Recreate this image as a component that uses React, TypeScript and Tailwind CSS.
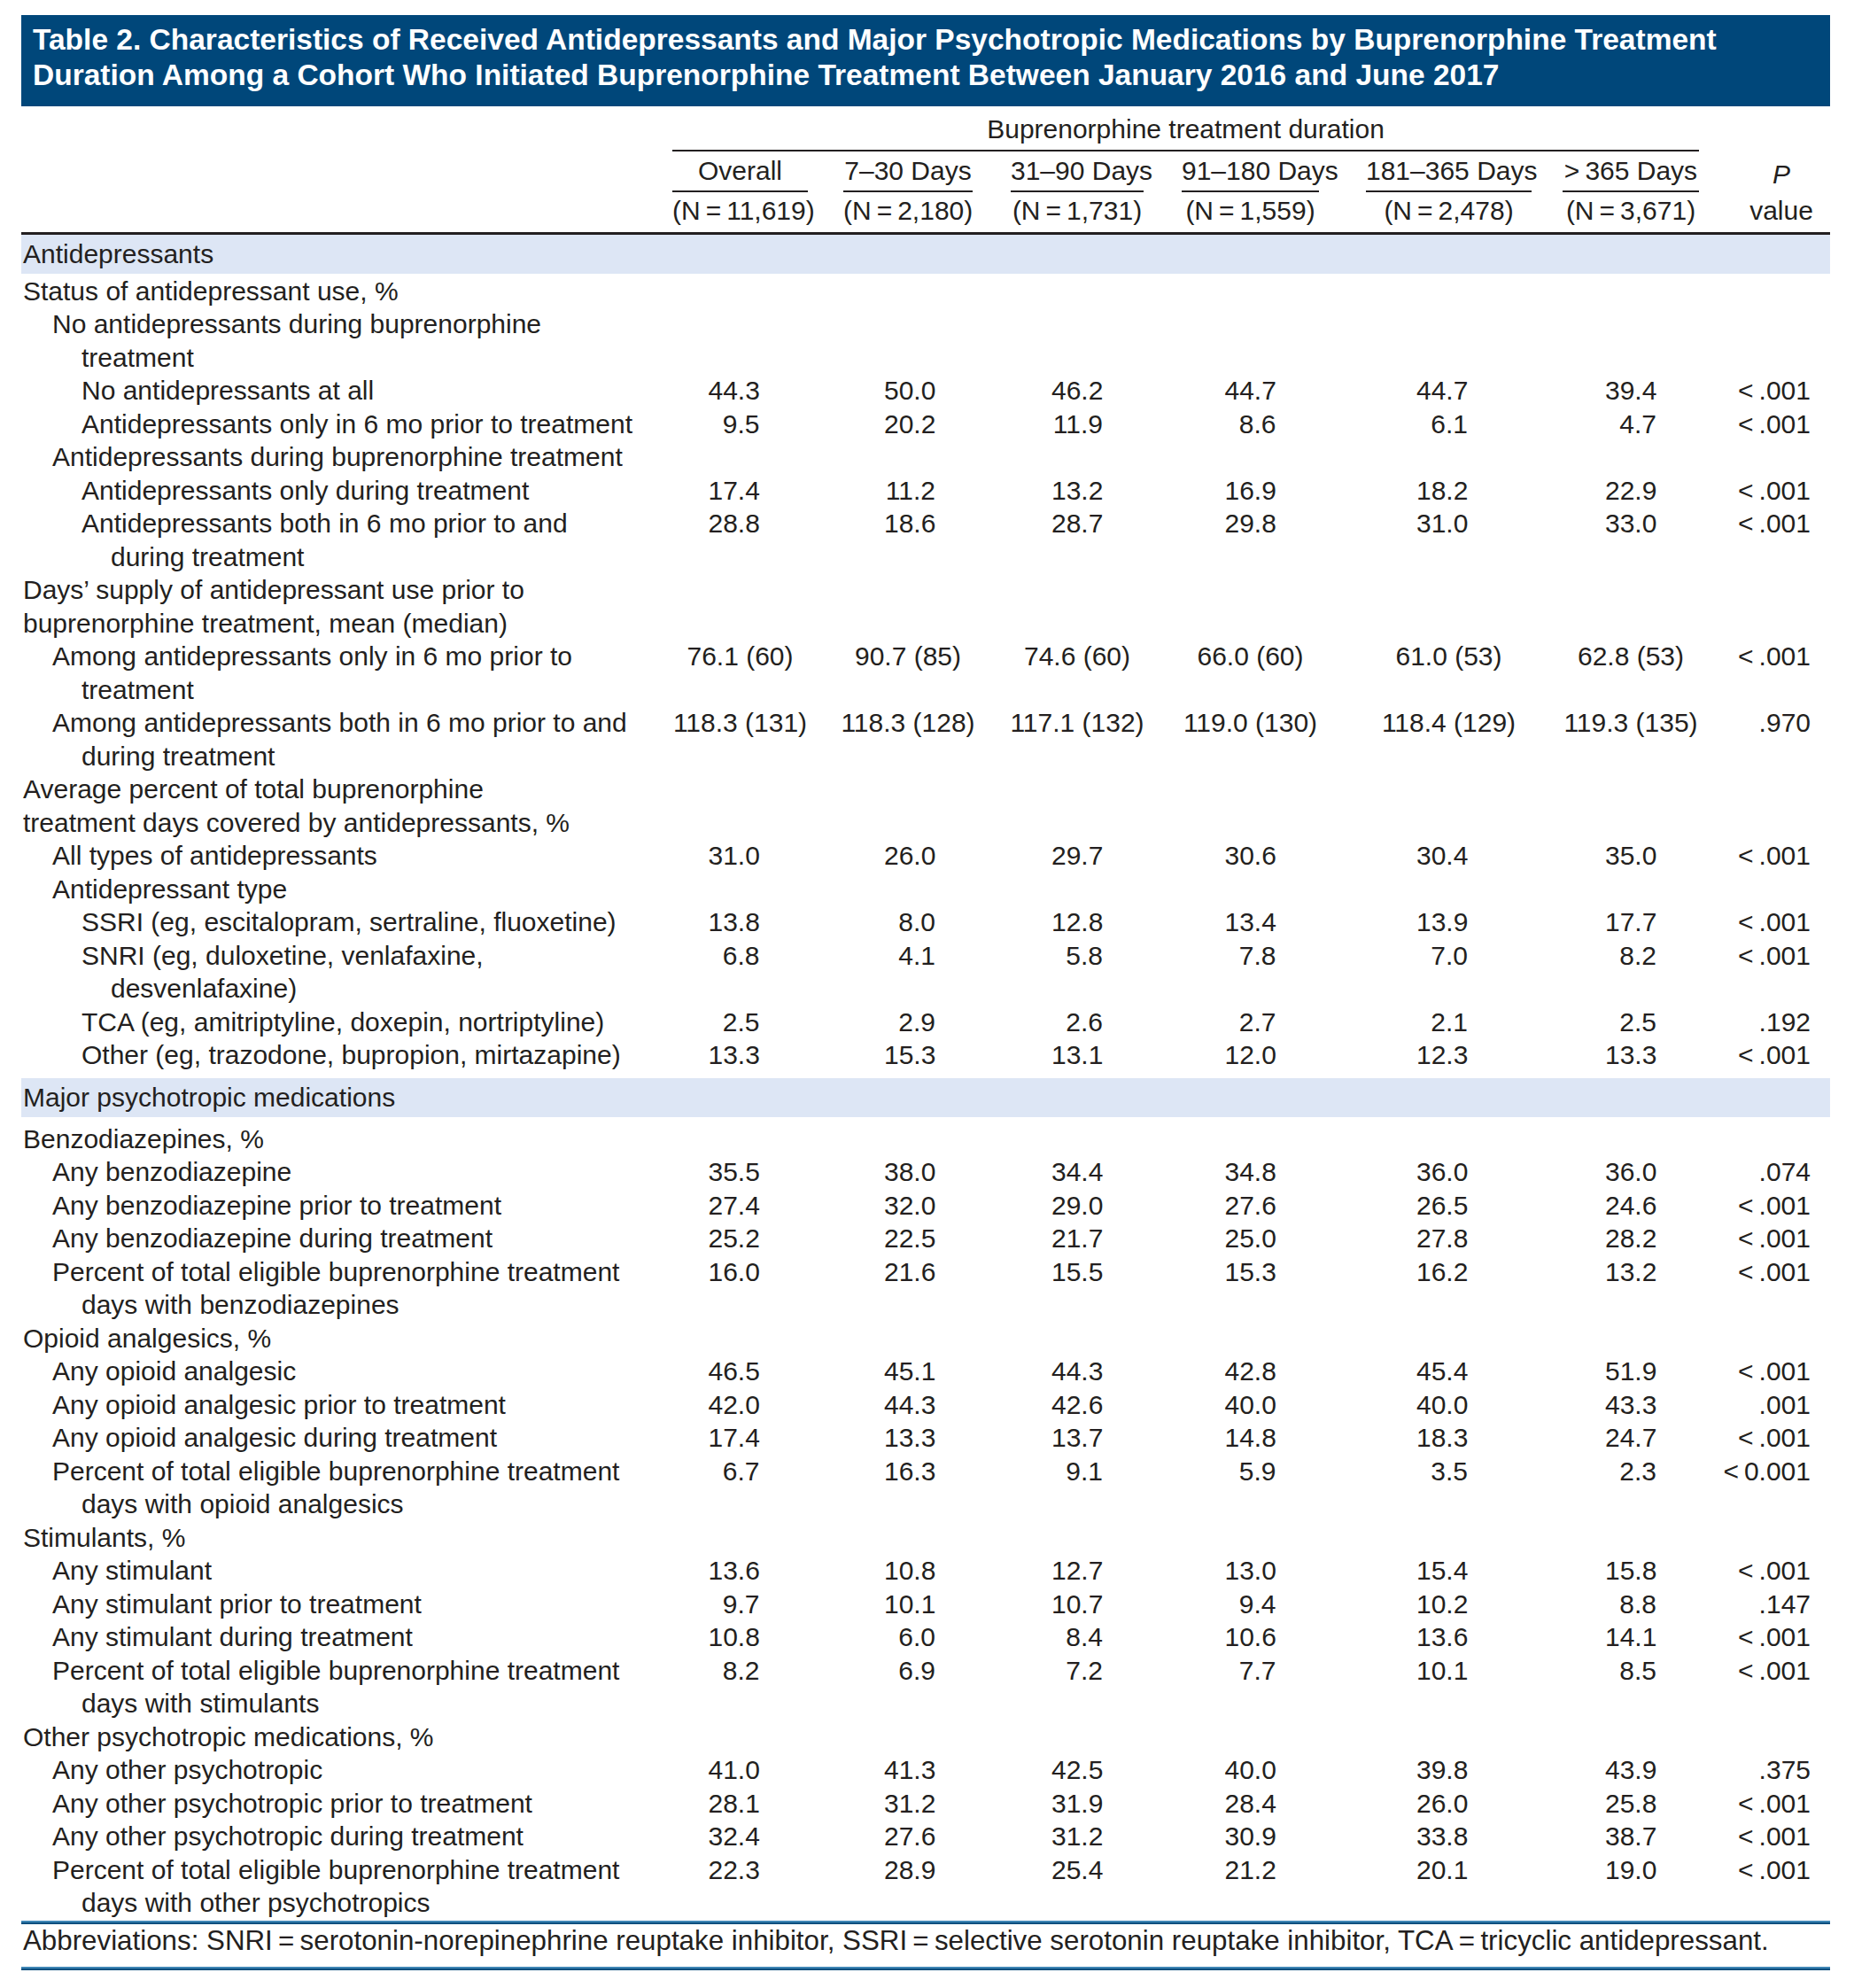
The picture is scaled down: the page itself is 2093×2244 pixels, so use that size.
import React from "react";

type R = { t: string; l: 0 | 1 | 2; c?: string; v?: string[]; p?: string; long?: boolean };

const LT = "<\u2009.001";

const S1: R[] = [
  { t: "Status of antidepressant use, %", l: 0 },
  { t: "No antidepressants during buprenorphine", l: 1, c: "treatment" },
  { t: "No antidepressants at all", l: 2, v: ["44.3", "50.0", "46.2", "44.7", "44.7", "39.4"], p: LT },
  { t: "Antidepressants only in 6 mo prior to treatment", l: 2, v: ["9.5", "20.2", "11.9", "8.6", "6.1", "4.7"], p: LT },
  { t: "Antidepressants during buprenorphine treatment", l: 1 },
  { t: "Antidepressants only during treatment", l: 2, v: ["17.4", "11.2", "13.2", "16.9", "18.2", "22.9"], p: LT },
  { t: "Antidepressants both in 6 mo prior to and", l: 2, c: "during treatment", v: ["28.8", "18.6", "28.7", "29.8", "31.0", "33.0"], p: LT },
  { t: "Days\u2019 supply of antidepressant use prior to", l: 0, c: "buprenorphine treatment, mean (median)" },
  { t: "Among antidepressants only in 6 mo prior to", l: 1, c: "treatment", v: ["76.1 (60)", "90.7 (85)", "74.6 (60)", "66.0 (60)", "61.0 (53)", "62.8 (53)"], p: LT, long: true },
  { t: "Among antidepressants both in 6 mo prior to and", l: 1, c: "during treatment", v: ["118.3 (131)", "118.3 (128)", "117.1 (132)", "119.0 (130)", "118.4 (129)", "119.3 (135)"], p: ".970", long: true },
  { t: "Average percent of total buprenorphine", l: 0, c: "treatment days covered by antidepressants, %" },
  { t: "All types of antidepressants", l: 1, v: ["31.0", "26.0", "29.7", "30.6", "30.4", "35.0"], p: LT },
  { t: "Antidepressant type", l: 1 },
  { t: "SSRI (eg, escitalopram, sertraline, fluoxetine)", l: 2, v: ["13.8", "8.0", "12.8", "13.4", "13.9", "17.7"], p: LT },
  { t: "SNRI (eg, duloxetine, venlafaxine,", l: 2, c: "desvenlafaxine)", v: ["6.8", "4.1", "5.8", "7.8", "7.0", "8.2"], p: LT },
  { t: "TCA (eg, amitriptyline, doxepin, nortriptyline)", l: 2, v: ["2.5", "2.9", "2.6", "2.7", "2.1", "2.5"], p: ".192" },
  { t: "Other (eg, trazodone, bupropion, mirtazapine)", l: 2, v: ["13.3", "15.3", "13.1", "12.0", "12.3", "13.3"], p: LT },
];

const S2: R[] = [
  { t: "Benzodiazepines, %", l: 0 },
  { t: "Any benzodiazepine", l: 1, v: ["35.5", "38.0", "34.4", "34.8", "36.0", "36.0"], p: ".074" },
  { t: "Any benzodiazepine prior to treatment", l: 1, v: ["27.4", "32.0", "29.0", "27.6", "26.5", "24.6"], p: LT },
  { t: "Any benzodiazepine during treatment", l: 1, v: ["25.2", "22.5", "21.7", "25.0", "27.8", "28.2"], p: LT },
  { t: "Percent of total eligible buprenorphine treatment", l: 1, c: "days with benzodiazepines", v: ["16.0", "21.6", "15.5", "15.3", "16.2", "13.2"], p: LT },
  { t: "Opioid analgesics, %", l: 0 },
  { t: "Any opioid analgesic", l: 1, v: ["46.5", "45.1", "44.3", "42.8", "45.4", "51.9"], p: LT },
  { t: "Any opioid analgesic prior to treatment", l: 1, v: ["42.0", "44.3", "42.6", "40.0", "40.0", "43.3"], p: ".001" },
  { t: "Any opioid analgesic during treatment", l: 1, v: ["17.4", "13.3", "13.7", "14.8", "18.3", "24.7"], p: LT },
  { t: "Percent of total eligible buprenorphine treatment", l: 1, c: "days with opioid analgesics", v: ["6.7", "16.3", "9.1", "5.9", "3.5", "2.3"], p: "<\u20090.001" },
  { t: "Stimulants, %", l: 0 },
  { t: "Any stimulant", l: 1, v: ["13.6", "10.8", "12.7", "13.0", "15.4", "15.8"], p: LT },
  { t: "Any stimulant prior to treatment", l: 1, v: ["9.7", "10.1", "10.7", "9.4", "10.2", "8.8"], p: ".147" },
  { t: "Any stimulant during treatment", l: 1, v: ["10.8", "6.0", "8.4", "10.6", "13.6", "14.1"], p: LT },
  { t: "Percent of total eligible buprenorphine treatment", l: 1, c: "days with stimulants", v: ["8.2", "6.9", "7.2", "7.7", "10.1", "8.5"], p: LT },
  { t: "Other psychotropic medications, %", l: 0 },
  { t: "Any other psychotropic", l: 1, v: ["41.0", "41.3", "42.5", "40.0", "39.8", "43.9"], p: ".375" },
  { t: "Any other psychotropic prior to treatment", l: 1, v: ["28.1", "31.2", "31.9", "28.4", "26.0", "25.8"], p: LT },
  { t: "Any other psychotropic during treatment", l: 1, v: ["32.4", "27.6", "31.2", "30.9", "33.8", "38.7"], p: LT },
  { t: "Percent of total eligible buprenorphine treatment", l: 1, c: "days with other psychotropics", v: ["22.3", "28.9", "25.4", "21.2", "20.1", "19.0"], p: LT },
];

const GRID = "grid grid-cols-[735px_153px_186px_193px_198px_240px_189px_148px]";
const GAP = ["pl-0", "pl-[40px]", "pl-[43px]", "pl-[43px]", "pl-[53px]", "pl-[35px]"];
const SHIFT = ["pr-[14px]", "pl-[4px]", "", "", "pr-[15px]", ""];
const IND = ["pl-[2px]", "pl-[35px]", "pl-[68px]"];
const CIND = ["pl-[2px]", "pl-[68px]", "pl-[101px]"];

const HEAD = ["Overall", "7\u201330 Days", "31\u201390 Days", "91\u2013180 Days", "181\u2013365 Days", ">\u2009365 Days"];
const NS = [
  "(N\u2009=\u200911,619)",
  "(N\u2009=\u20092,180)",
  "(N\u2009=\u20091,731)",
  "(N\u2009=\u20091,559)",
  "(N\u2009=\u20092,478)",
  "(N\u2009=\u20093,671)",
];

function DataRow({ r }: { r: R }) {
  return (
    <div className={GRID}>
      <div className="whitespace-nowrap">
        <div className={IND[r.l]}>{r.t}</div>
        {r.c && <div className={CIND[r.l]}>{r.c}</div>}
      </div>
      {r.v ? (
        r.v.map((x, i) => (
          <div key={i} className={GAP[i]}>
            {r.long ? (
              <div className="flex justify-center">
                <span className="whitespace-nowrap">{x}</span>
              </div>
            ) : (
              <div className={"flex justify-center " + SHIFT[i]}>
                <span className="inline-block w-[58px] text-right whitespace-nowrap">{x}</span>
              </div>
            )}
          </div>
        ))
      ) : (
        <div className="col-span-6" />
      )}
      <div className="text-right pr-[22px] whitespace-nowrap">{r.p}</div>
    </div>
  );
}

function Band({ children, cls }: { children: React.ReactNode; cls: string }) {
  return <div className={"h-[44px] bg-[#dde6f5] flex items-center pl-[2px] " + cls}>{children}</div>;
}

function Rule() {
  return (
    <div>
      <div className="h-[2px] bg-[#3f86b5]" />
      <div className="h-[2px] bg-[#0b4f7e]" />
    </div>
  );
}

export default function App() {
  return (
    <div className="w-[2093px] h-[2244px] bg-white overflow-hidden font-['Liberation_Sans',Arial,sans-serif] text-[#231f20] text-[30px] leading-[37.5px]">
      <div className="ml-[24px] w-[2042px]">
        <div className="mt-[17px] bg-[#00477a] text-white font-bold text-[33.5px] leading-[40px] pl-[13px] pt-[8px] pb-[15px]">
          Table 2. Characteristics of Received Antidepressants and Major Psychotropic Medications by Buprenorphine Treatment
          <br />
          Duration Among a Cohort Who Initiated Buprenorphine Treatment Between January 2016 and June 2017
        </div>

        <div className={GRID + " mt-[7px]"}>
          <div />
          <div className="col-span-6 text-center border-b-2 border-[#231f20] pb-[4px]">Buprenorphine treatment duration</div>
          <div />
        </div>
        <div className={GRID + " pt-[3px]"}>
          <div />
          {HEAD.map((h, i) => (
            <div key={i} className={GAP[i]}>
              <div className="text-center border-b-2 border-[#231f20] pb-[4px] whitespace-nowrap">{h}</div>
            </div>
          ))}
          <div className="text-center pl-[38px] italic pt-[4px]">P</div>
        </div>
        <div className={GRID + " pt-[2px] pb-[5px] border-b-[3px] border-[#231f20]"}>
          <div />
          {NS.map((h, i) => (
            <div key={i} className={GAP[i]}>
              <div className="text-center whitespace-nowrap">{h}</div>
            </div>
          ))}
          <div className="text-center pl-[38px]">value</div>
        </div>

        <Band cls="">Antidepressants</Band>
        <div className="pt-[1px]">
          {S1.map((r, i) => (
            <DataRow key={i} r={r} />
          ))}
        </div>
        <Band cls="mt-[7px]">Major psychotropic medications</Band>
        <div className="pt-[6px]">
          {S2.map((r, i) => (
            <DataRow key={i} r={r} />
          ))}
        </div>

        <div className="mt-[1.5px]">
          <Rule />
        </div>
        <div className="h-[38px] leading-[38px] pl-[2px] whitespace-nowrap text-[31.3px]">
          Abbreviations: SNRI{"\u2009=\u2009"}serotonin-norepinephrine reuptake inhibitor, SSRI{"\u2009=\u2009"}selective serotonin reuptake inhibitor, TCA{"\u2009=\u2009"}tricyclic antidepressant.
        </div>
        <div className="mt-[10px]">
          <Rule />
        </div>
      </div>
    </div>
  );
}
